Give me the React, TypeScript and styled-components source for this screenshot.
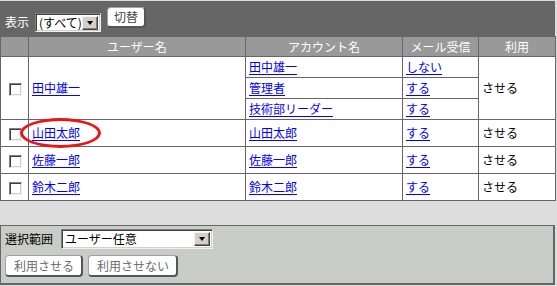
import * as React from "react";
import styled, { createGlobalStyle } from "styled-components";

const GlobalStyle = createGlobalStyle`
  html, body {
    margin: 0;
    padding: 0;
    background: #dddddd;
  }
  body {
    font-family: "Noto Sans CJK JP", "DejaVu Sans", sans-serif;
    font-size: 12px;
    line-height: 16px;
    color: #000;
  }
`;

const Page = styled.div`
  width: 555px;
  padding-top: 1px;
`;

const ListFrame = styled.div`
  background: #666666;
`;

const Toolbar = styled.div`
  height: 35px;
  display: flex;
  align-items: center;
  gap: 6px;
  padding-left: 5px;
  color: #fff;
  box-sizing: border-box;
`;

const FilterLabel = styled.span`
  margin-top: 7px;
`;

const FakeSelect = styled.div<{ $width: number; $height?: number }>`
  width: ${(p) => p.$width}px;
  height: ${(p) => p.$height ?? 19}px;
  box-sizing: border-box;
  background: #fff;
  color: #000;
  border: 1px solid;
  border-color: #808080 #f0f0f0 #f0f0f0 #808080;
  box-shadow: inset 1px 1px #404040, inset -1px -1px #d4d0c8;
  display: flex;
  align-items: center;
  padding: 2px 2px 2px 3px;
  font-size: 12px;
  line-height: 1;
`;

const SelectText = styled.span`
  flex: 1;
  white-space: nowrap;
`;

const SelectArrow = styled.span`
  width: 16px;
  height: 14px;
  box-sizing: border-box;
  background: #d4d0c8;
  border: 1px solid;
  border-color: #f4f4f4 #404040 #404040 #f4f4f4;
  box-shadow: inset -1px -1px #808080;
  display: flex;
  align-items: center;
  justify-content: center;

  &::after {
    content: "";
    border-left: 3.5px solid transparent;
    border-right: 3.5px solid transparent;
    border-top: 4px solid #000;
  }
`;

const Button = styled.button<{ $muted?: boolean }>`
  font-family: inherit;
  font-size: 12px;
  height: 22px;
  padding: 0 7px 0 8px;
  background: #fff;
  color: ${(p) => (p.$muted ? "#6a6a6a" : "#444")};
  border: 1px solid #a0a0a0;
  border-right: 2px solid #555;
  border-bottom: 2px solid #555;
  border-radius: 4px;
  line-height: 1;
  cursor: pointer;
`;

const SwitchButton = styled(Button)`
  align-self: flex-start;
  margin-top: 6px;
  width: 39px;
  height: 21px;
  padding: 0;
`;

const Grid = styled.table`
  width: 555px;
  border-collapse: collapse;
  table-layout: fixed;
  background: #fff;
`;

const HeadCell = styled.th`
  background: #999999;
  color: #fff;
  font-weight: normal;
  height: 19px;
  padding: 0;
  border: 1px solid #666;
  text-align: center;
`;

const Cell = styled.td<{ $h?: number }>`
  border: 1px solid #666;
  padding: 0 0 0 3px;
  height: ${(p) => p.$h ?? 26}px;
  vertical-align: middle;
  white-space: nowrap;
`;

const CheckCell = styled(Cell)`
  padding: 0;
  text-align: center;
`;

const Check = styled.span`
  display: inline-block;
  vertical-align: middle;
  width: 13px;
  height: 13px;
  box-sizing: border-box;
  background: #fff;
  border: 1px solid;
  border-color: #808080 #f0f0f0 #f0f0f0 #808080;
  box-shadow: inset 1px 1px #404040, inset -1px -1px #d4d0c8;
  margin-left: 2px;
`;

const NameWrap = styled.span`
  position: relative;
  display: inline-block;
`;

const Circle = styled.span`
  position: absolute;
  left: -12px;
  top: -7px;
  width: 81px;
  height: 30px;
  box-sizing: border-box;
  border: 3px solid #ee1414;
  border-radius: 50%;
  pointer-events: none;
`;

const Link = styled.a`
  color: #0000ff;
  text-decoration: underline;
  text-underline-offset: 2px;
  cursor: pointer;
`;

const Spacer = styled.div`
  height: 24px;
`;

const ActionPanel = styled.div`
  width: 555px;
  height: 60px;
  box-sizing: border-box;
  border: 1px solid #666;
  border-width: 1px 2px 2px 1px;
  background-color: #c9cbc6;
  background-image: repeating-conic-gradient(#c6c8c3 0 25%, #cdcfca 0 50%);
  background-size: 2px 2px;
  padding: 3px 4px;
  display: flex;
  flex-direction: column;
  gap: 6px;
`;

const PanelRow = styled.div<{ $gap: number }>`
  display: flex;
  align-items: center;
  gap: ${(p) => p.$gap}px;
`;

interface Account {
  name: string;
  mail: string;
}

interface User {
  name: string;
  accounts: Account[];
  use: string;
  marked?: boolean;
}

const users: User[] = [
  {
    name: "田中雄一",
    accounts: [
      { name: "田中雄一", mail: "しない" },
      { name: "管理者", mail: "する" },
      { name: "技術部リーダー", mail: "する" },
    ],
    use: "させる",
  },
  { name: "山田太郎", accounts: [{ name: "山田太郎", mail: "する" }], use: "させる", marked: true },
  { name: "佐藤一郎", accounts: [{ name: "佐藤一郎", mail: "する" }], use: "させる" },
  { name: "鈴木二郎", accounts: [{ name: "鈴木二郎", mail: "する" }], use: "させる" },
];

function UserRows({ user }: { user: User }) {
  const span = user.accounts.length;
  const h = span > 1 ? 20 : 26;
  return (
    <>
      {user.accounts.map((acc, i) => (
        <tr key={acc.name}>
          {i === 0 && (
            <>
              <CheckCell rowSpan={span}>
                <Check />
              </CheckCell>
              <Cell rowSpan={span}>
                <NameWrap>
                  <Link>{user.name}</Link>
                  {user.marked && <Circle />}
                </NameWrap>
              </Cell>
            </>
          )}
          <Cell $h={h}>
            <Link>{acc.name}</Link>
          </Cell>
          <Cell $h={h}>
            <Link>{acc.mail}</Link>
          </Cell>
          {i === 0 && <Cell rowSpan={span}>{user.use}</Cell>}
        </tr>
      ))}
    </>
  );
}

export default function App() {
  return (
    <Page>
      <GlobalStyle />
      <ListFrame>
        <Toolbar>
          <FilterLabel>表示</FilterLabel>
          <FakeSelect $width={66} style={{ marginTop: 8 }}>
            <SelectText>(すべて)</SelectText>
            <SelectArrow />
          </FakeSelect>
          <SwitchButton>切替</SwitchButton>
        </Toolbar>
        <Grid>
          <colgroup>
            <col style={{ width: 28 }} />
            <col style={{ width: 217 }} />
            <col style={{ width: 157 }} />
            <col style={{ width: 76 }} />
            <col style={{ width: 77 }} />
          </colgroup>
          <thead>
            <tr>
              <HeadCell />
              <HeadCell>ユーザー名</HeadCell>
              <HeadCell>アカウント名</HeadCell>
              <HeadCell>メール受信</HeadCell>
              <HeadCell>利用</HeadCell>
            </tr>
          </thead>
          <tbody>
            {users.map((u) => (
              <UserRows key={u.name} user={u} />
            ))}
          </tbody>
        </Grid>
      </ListFrame>
      <Spacer />
      <ActionPanel>
        <PanelRow $gap={8}>
          <span>選択範囲</span>
          <FakeSelect $width={152} $height={20}>
            <SelectText>ユーザー任意</SelectText>
            <SelectArrow />
          </FakeSelect>
        </PanelRow>
        <PanelRow $gap={5}>
          <Button $muted>利用させる</Button>
          <Button $muted>利用させない</Button>
        </PanelRow>
      </ActionPanel>
    </Page>
  );
}
